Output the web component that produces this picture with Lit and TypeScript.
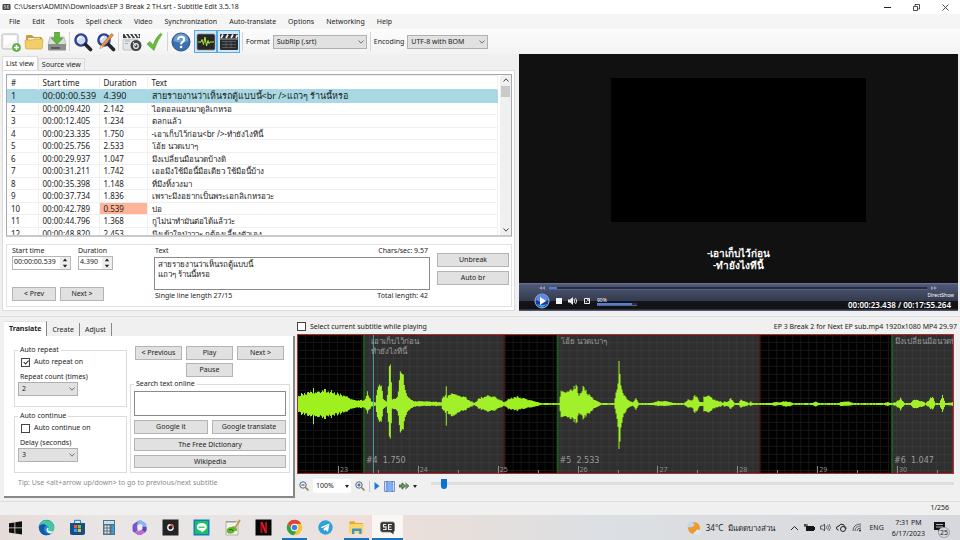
import { LitElement, html, svg, css } from "lit";
import { customElement, property } from "lit/decorators.js";
import { classMap } from "lit/directives/class-map.js";

const base = css`
  :host { display: block; box-sizing: border-box; font: 7px/10px "Noto Sans", "Liberation Sans", sans-serif; color: #1c1c1c; }
  *, *::before, *::after { box-sizing: border-box; }
  button, input, select, textarea { font: inherit; color: inherit; margin: 0; border-radius: 0; outline: 0; }
  svg { display: block; flex: none; }
  .btn { height: 14px; padding: 0; border: 1px solid #b4b4b4; background: #e1e1e1; line-height: 10px; white-space: nowrap; }
  .pick { position: relative; display: block; }
  .pick select { appearance: none; width: 100%; height: 14px; padding: 0 3px; border: 1px solid #b0b0b0; background: #e1e1e1; line-height: 10px; display: block; }
  .pick svg { position: absolute; right: 3px; top: 5px; pointer-events: none; }
  .check { display: flex; align-items: center; gap: 4px; white-space: nowrap; }
  .check input { appearance: none; width: 9px; height: 9px; border: 1px solid #444; background: #fff; display: grid; place-items: center; }
  .check input:checked::before { content: ""; width: 5px; height: 3px; border: solid #222; border-width: 0 0 1px 1px; transform: rotate(-48deg) translate(1px, 0); }
`;

const chevron = html`<svg width="6" height="4" viewBox="0 0 6 4"><path d="M.5.5 3 3.2 5.5.5" fill="none" stroke="#555" stroke-width=".8"/></svg>`;

const lens = svg`<circle cx="8" cy="8" r="5.6" fill="#cfdcf4" stroke="#2f3f94" stroke-width="2.4"/><path d="M5 8a3 3 0 0 1 3-3" stroke="#fff" stroke-width="1.3" fill="none"/>`;

const toolIcons = {
  fresh: svg`<rect x="1" y="2" width="16" height="15" rx="1.5" fill="#f4f4f2" stroke="#b7b9b5"/><path d="M3 4h12v5Q9 10 3 14z" fill="#fff"/><circle cx="15.500" cy="15.500" r="4" fill="#63b640" stroke="#4b9530" stroke-width=".6"/><path d="M15.500 13v5M13 15.500h5" stroke="#fff" stroke-width="1.500"/>`,
  open: svg`<path d="M2 4q0-1 1-1h5l2 2h7q1 0 1 1v10H2z" fill="#c99f3c"/><path d="M4 6h12v5H4z" fill="#f2f2ee"/><path d="M1 9q0-1 1-1h7l1-1h8q1.200 0 1 1l-.7 8q-.1 1-1 1H2.500q-.9 0-1-1z" fill="#f3cd67" stroke="#d2a53e" stroke-width=".7"/>`,
  save: svg`<path d="M3 5h14l2 8H1z" fill="#dcdedd" stroke="#a0a3a2" stroke-width=".6"/><rect x="1" y="12" width="18" height="6.500" rx="1" fill="#8b908f"/><path d="M4 16h9" stroke="#444b4b" stroke-width="1.500"/><path d="M7.500 0h5v6H16l-6 6.500L4 6h3.500z" fill="#63b53e" stroke="#438e2a" stroke-width=".6"/>`,
  find: svg`${lens}<path d="m12.500 12.500 5 5" stroke="#23252f" stroke-width="3.600" stroke-linecap="round"/>`,
  replace: svg`${lens}<path d="m12.500 12.500 5 5" stroke="#23252f" stroke-width="3.600" stroke-linecap="round"/><path d="M17.500 3 7 15l-3 1.500 1-3L15.500 1.500z" fill="#ec9440" stroke="#a65c1d" stroke-width=".6"/><path d="m5 13.500 2 1.500-3 1.500z" fill="#f4ddb5"/>`,
  visual: svg`<rect x="1" y="7" width="15" height="11" rx="1" fill="#e5e6e7" stroke="#a4a6a8" stroke-width=".6"/><path d="M1 2h17v4H1z" fill="#35383a"/><path d="m3 2 3 4m1-4 3 4m1-4 3 4m1-4 2 3" stroke="#f3f3f3" stroke-width="1.600"/><path d="M3 9h5M3 11.500h3" stroke="#aaa"/><circle cx="14" cy="13.500" r="5.500" fill="#424548"/><circle cx="14" cy="14" r="2.300" fill="none" stroke="#eee" stroke-width="1.200"/><path d="m14 14-3-4" stroke="#eee"/>`,
  check: svg`<path d="M2 12 5 9.500l3 3.500Q11 5 15.500 1.500l1.500.8Q12 9 9 18.500z" fill="#6bbb3e" stroke="#4d982c" stroke-width=".6"/>`,
  help: svg`<circle cx="10" cy="10" r="9" fill="#3a70b0" stroke="#27508a"/><path d="M2.500 9a7.500 7.500 0 0 1 15 0q-7 3-15 0" fill="#6d9ccd"/><path d="M7 7.700q.2-3 3.200-3t3 2.700q0 1.500-1.600 2.400T10.100 12.500" fill="none" stroke="#fff" stroke-width="2"/><circle cx="10.100" cy="15" r="1.300" fill="#fff"/>`,
  wave: svg`<rect x="1" y="2" width="18" height="16" rx="1.500" fill="#252826" stroke="#8b8e8b" stroke-width=".7"/><path d="M2 10h3l1-2.500 1.500 5L9 5l1.500 9 1.500-5.500 1 3 1-1.500h4" fill="none" stroke="#b7e838"/>`,
  clap: svg`<rect x="1" y="2" width="18" height="16" rx="1" fill="#2a2c2e"/><path d="m2 6 2-3.500m3 3.500 2-3.500m3 3.500 2-3.500m3 3.500 1.500-3" stroke="#eee" stroke-width="1.700"/><path d="M1 7h18" stroke="#ddd" stroke-width=".7"/><path d="M3 9.500h14M3 12.500h14M3 15.500h14M7 9v7M12 9v7" stroke="#777" stroke-width=".6"/>`,
};

const taskIcons = [
  { name: "Start", art: svg`<path d="M2 4.200 7.500 3.400v5.100H2zM8.300 3.300 15 2.300v6.200H8.300zM2 9.300h5.500v5.100L2 13.600zM8.300 9.300H15v6.200l-6.700-1z" fill="#101010"/>` },
  { name: "Edge", art: svg`<circle cx="8.500" cy="8.500" r="7.800" fill="#1c86d1"/><path d="M1 7a7.800 7.800 0 0 1 15.300 2q0 3.300-3.700 3.300-2.700 0-2.600-1.800 1.200-.8.500-2.400C9 5.200 3.500 4.500 1 7" fill="#43c99a"/><path d="M1 8c2-3.500 6-3 7-1.500Q5.500 8 6 11q1 4 6.500 4.200Q5 18 2 12.500 1 10 1 8" fill="#1557a5"/><path d="M10 10.500q0 1.800 2.600 1.800 1.600 0 2.800-.6-.8 2.300-3 2.700-4.200-.5-4-4 .3-1.900 1.600-1.900 1.400 1 0 2" fill="#e9f4f8"/>` },
  { name: "Store", art: svg`<path d="M5.500 4V2q0-.7.700-.7h4.600q.7 0 .7.700v2" fill="none" stroke="#2b8dd0" stroke-width="1.200"/><path d="M1 4h15v10q0 2-2 2H3q-2 0-2-2z" fill="#164f87"/><path d="M5 6h3.200v3.200H5z" fill="#f05a28"/><path d="M8.900 6H12v3.200H8.900z" fill="#84bf30"/><path d="M5 9.900h3.200V13H5z" fill="#25a4e8"/><path d="M8.900 9.900H12V13H8.900z" fill="#fab91c"/>` },
  { name: "Calculator", art: svg`<rect x="3" y="1" width="12" height="15" fill="#5b6c7c"/><rect x="4" y="2" width="10" height="3" fill="#bfe3f6"/><path d="M4.500 7.500h6M4.500 10.500h6M4.500 13.500h6" stroke="#e3eaf0" stroke-width="2" stroke-dasharray="2 1"/><path d="M11.500 6.500H14V15h-2.500z" fill="#30a0dd"/>` },
  { name: "Microsoft 365", art: svg`<path d="M9 1 3 4.500Q1.500 5.500 1.500 7v4q0 2 2 2.500l3-1.500V6z" fill="#7a56c8"/><path d="M9 1q1 0 5.500 3 1 .8 1 2.500v4L11 8V5.500L6.500 6Q6 2.500 9 1" fill="#86b6ee"/><path d="M15.500 8q.5 4-1 5L10 15.800q-1.500.6-3 0L3.500 13.500 11 11V7.500z" fill="#5a49aa"/><path d="M3.500 13.500 7 12l4-1 3.500 2L10 15.800q-1.500.6-3 0z" fill="#bd6cd5"/><path d="M6.500 6.500 9 5l2.500 1.500v3.500L9 11.500 6.500 10z" fill="#efeaf2"/>` },
  { name: "Recorder", art: svg`<path d="M.5.500h16v16H.5z" fill="#222325"/><circle cx="8.500" cy="8.500" r="2.700" fill="none" stroke="#f1f1f1" stroke-width="1.400"/><path d="M8.500 5.800a2.700 2.700 0 0 1 2.700 2.700" fill="none" stroke="#e5392d" stroke-width="1.500"/>` },
  { name: "LINE", art: svg`<path d="M.5.500h16v16H.5z" fill="#147bc0"/><path d="M3 2h11q1 0 1 1v11q0 1-1 1H3q-1 0-1-1V3q0-1 1-1" fill="#19c163"/><path d="M8.500 4c6.500 0 6.500 5.500 3 7.500l-3 2v-1.700C2 11.800 2.500 4 8.500 4" fill="#fff"/><path d="M5.500 8.200h6" stroke="#19c163" stroke-width="1.200"/>` },
  { name: "Notepad++", art: svg`<path d="M2 2.500h12V16H2z" fill="#f2f3ed" stroke="#9d9f95" stroke-width=".7"/><path d="M3 2v2m2-2v2m2-2v2m2-2v2m2-2v2" stroke="#777" stroke-width=".7"/><path d="M2.500 13q0-5 5-5 3-2 5 1l1 3q-3-1-4 2-5 2-7-1" fill="#67b52c"/><path d="M5 11q3-2 4 1" fill="none" stroke="#265d15"/><path d="m16 1-5 8" stroke="#c89945" stroke-width="1.700"/>` },
  { name: "Netflix", art: svg`<path d="M.5.500h16v16H.5z" fill="#080707"/><path d="M5.500 3h2v11h-2zM10 3h2v11h-2z" fill="#a8101a"/><path d="M5.500 3h2L12 14h-2z" fill="#e51a26"/>` },
  { name: "Chrome", run: true, art: svg`<circle cx="8.500" cy="8.500" r="7.700" fill="#f7c52b"/><path d="M1.800 4.700a7.700 7.700 0 0 1 13.400 0L8.500 5Q5.500 5.500 5.500 10z" fill="#df4334"/><path d="M1.800 4.700 5.500 10.500q2 2.500 5 1.500l-2.800 4.200A7.700 7.700 0 0 1 1.800 4.700" fill="#2fa251"/><circle cx="8.500" cy="8.500" r="3.700" fill="#fff"/><circle cx="8.500" cy="8.500" r="2.800" fill="#3f7fe5"/>` },
  { name: "Telegram", art: svg`<circle cx="8.500" cy="8.500" r="7.200" fill="#2fa0d8"/><path d="m3.500 8.200 9-3.700L11 12.700 8.300 10.800 7 12.200l-.4-2.700L11 6 5.600 9z" fill="#fff"/>` },
  { name: "File Explorer", run: true, art: svg`<path d="M1.500 3q0-.8.800-.8H6L7.500 4H15v10H1.500z" fill="#e8a72c"/><path d="M1.500 5H15.500v9.500h-14z" fill="#fad66b"/><path d="M4 9.500h9.500v5.500h-2.300v-3H6.300v3H4z" fill="#3d92c9"/>` },
  { name: "Subtitle Edit", run: true, on: true, art: svg`<rect x="1.500" y="3" width="14" height="10" rx="2" fill="#343536" stroke="#777" stroke-width=".8"/><path d="m11 12.500 3.500 3v-4z" fill="#343536"/><path d="M7.200 5.500H4.500v2.400h2.500v2.600H4M12.800 5.500H9.500v5h3.300M9.500 8h2.800" fill="none" stroke="#eee" stroke-width="1.100"/>` },
];

const rows: [string, string, string][] = [
  ["00:00:00.539", "4.390", "สายรายงานว่าเห็นรถตู้แบบนี้<br />แถวๆ ร้านนี้หรอ"],
  ["00:00:09.420", "2.142", "ไอดอลแอบมาดูลิเกหรอ"],
  ["00:00:12.405", "1.234", "ตลกแล้ว"],
  ["00:00:23.335", "1.750", "-เอาเก็บไว้ก่อน<br />-ทำยังไงทีนี้"],
  ["00:00:25.756", "2.533", "โอ้ย นวดเบาๆ"],
  ["00:00:29.937", "1.047", "มึงเปลี่ยนมือนวดบ้างดิ"],
  ["00:00:31.211", "1.742", "เออมึงใช้มือนี้มือเดียว ใช้มือนี้บ้าง"],
  ["00:00:35.398", "1.148", "ที่มึงทิ้งวงมา"],
  ["00:00:37.734", "1.836", "เพราะมึงอยากเป็นพระเอกลิเกหรอวะ"],
  ["00:00:42.789", "0.539", "ปอ"],
  ["00:00:44.796", "1.368", "กูไม่น่าทำมันต่อได้แล้วว่ะ"],
  ["00:00:48.820", "2.453", "มึงเข้าใจป่าววะ กูต้องเลี้ยงตัวเอง"],
];

@customElement("subtitle-list")
class SubtitleList extends LitElement {
  static styles = [base, css`
    :host { display: flex; min-height: 0; flex: 1; border: 1px solid #a3a8b0; border-bottom: 2px solid #c9c9c9; background: #fff; overflow: hidden; font-size: 8px; }
    .clip { flex: 1; min-width: 0; height: 100%; overflow: hidden; }
    table { width: 100%; height: 165px; border-collapse: collapse; table-layout: fixed; }
    th, td { padding: 0 0 0 4px; text-align: left; font-weight: 400; white-space: nowrap; line-height: 11px; border: 1px solid #f0f0f0; border-left: 0; overflow: hidden; }
    thead tr { height: 14px; }
    th { border-bottom: 0; }
    .num { width: 31px; } .start { width: 61px; } .dur { width: 48px; }
    tr.sel td { background: #a9d8e5; border-color: #a9d8e5; font-size: 9px; }
    td.short { background: #ffb397; }
    .bar { width: 11px; background: #f0f0f0; display: flex; flex-direction: column; align-items: center; padding: 3px 0; margin-left: 2px; }
    .thumb { width: 9px; height: 11px; background: #c9c9c9; margin-top: 4px; }
    .down { margin-top: auto; }
  `];
  render() {
    return html`<div class="clip"><table>
      <thead><tr><th class="num">#</th><th class="start">Start time</th><th class="dur">Duration</th><th>Text</th></tr></thead>
      <tbody>${rows.map(([s, d, t], i) => html`<tr class=${classMap({ sel: i === 0 })}>
        <td>${i + 1}</td><td>${s}</td><td class=${classMap({ short: Number(d) < 1 })}>${d}</td><td>${t}</td></tr>`)}</tbody>
    </table></div>
    <div class="bar">
      <svg width="6" height="4" viewBox="0 0 6 4"><path d="M.5 3.500 3 .8l2.500 2.700" fill="none" stroke="#444"/></svg>
      <div class="thumb"></div>
      <svg class="down" width="6" height="4" viewBox="0 0 6 4"><path d="M.5.500 3 3.200 5.500.500" fill="none" stroke="#444"/></svg>
    </div>`;
  }
}

@customElement("subtitle-editor")
class SubtitleEditor extends LitElement {
  static styles = [base, css`
    :host { display: flex; flex: none; gap: 7px; height: 63px; border: 1px solid #e2e2e2; padding: 1px 2px 3px 5px; }
    .timing { width: 135px; display: flex; flex-direction: column; justify-content: space-between; }
    .fields { display: flex; gap: 7px; }
    .fields label { display: block; }
    .spin { display: flex; width: 59px; height: 14px; border: 1px solid #b5b5b5; background: #fff; }
    .spin.small { width: 35px; }
    .spin input { flex: 1; min-width: 0; width: 0; border: 0; padding: 0 0 2px 1px; background: none; }
    .arrows { width: 10px; background: #ededed; display: grid; place-items: center; }
    .nav { display: flex; gap: 4px; margin: 0 0 2px; }
    .nav .btn { width: 44px; }
    .text { flex: 1; display: flex; flex-direction: column; }
    .line { display: flex; justify-content: space-between; padding: 0 2px 0 1px; }
    textarea { flex: none; width: 100%; height: 33px; margin: 1px 0; padding: 1px 3px; border: 1px solid #8a8a8a; resize: none; font-size: 8px; line-height: 10px; overflow: hidden; }
    .side { width: 72px; display: flex; flex-direction: column; gap: 4px; padding-top: 7px; }
  `];
  render() {
    const arrows = html`<span class="arrows"><svg width="6" height="10" viewBox="0 0 6 10"><path d="M3 .5 5.200 3.300H.8zM3 9.500.8 6.700h4.400z" fill="#222"/></svg></span>`;
    return html`<div class="timing">
      <div class="fields">
        <div><label for="st">Start time</label><div class="spin"><input id="st" value="00:00:00.539">${arrows}</div></div>
        <div><label for="du">Duration</label><div class="spin small"><input id="du" value="4.390">${arrows}</div></div>
      </div>
      <div class="nav"><button class="btn">&lt; Prev</button><button class="btn">Next &gt;</button></div>
    </div>
    <div class="text">
      <div class="line"><label for="tx">Text</label><span>Chars/sec: 9.57</span></div>
      <textarea id="tx" .value=${"สายรายงานว่าเห็นรถตู้แบบนี้\nแถวๆ ร้านนี้หรอ"}></textarea>
      <div class="line"><span>Single line length 27/15</span><span>Total length: 42</span></div>
    </div>
    <div class="side"><button class="btn">Unbreak</button><button class="btn">Auto br</button></div>`;
  }
}

@customElement("video-player")
class VideoPlayer extends LitElement {
  static styles = [base, css`
    :host { display: flex; flex-direction: column; background: #111; color: #fff; }
    .stage { flex: 1; display: flex; flex-direction: column; align-items: center; padding: 24px 0 12px; }
    .frame { width: 58%; flex: 1; background: #000; }
    .subs { margin-top: 25px; text-align: center; font-size: 10px; line-height: 12px; font-weight: 600; }
    .controls { height: 28px; background: linear-gradient(#6c7695 0, #4c5675 2px, #434b65 9px, #343a4d 18px, #14151a 18px, #121213 26px, #4d5571 27px); padding: 1px 4px 0 20px; }
    .seek { display: flex; align-items: center; gap: 4px; height: 8px; padding-right: 17px; }
    .track { flex: 1; height: 3px; background: #272e42; border-bottom: 1px solid #596380; }
    .done { height: 2px; background: #4d7fdd; }
    .row { display: flex; align-items: center; gap: 6px; height: 18px; }
    .row button { border: 0; padding: 0; background: none; }
    .play { margin-left: -5px; }
    .vol { width: 41px; font-size: 5px; line-height: 6px; padding-left: 1px; }
    .vol .track { height: 3px; }
    .info { margin-left: auto; text-align: right; font-size: 5px; line-height: 7px; }
    .info b { display: block; font-size: 8px; line-height: 11px; font-weight: 600; padding-right: 3px; }
  `];
  render() {
    return html`<div class="stage"><div class="frame"></div><div class="subs">-เอาเก็บไว้ก่อน<br>-ทำยังไงทีนี้</div></div>
    <div class="controls">
      <div class="seek">
        <svg width="6" height="4" viewBox="0 0 6 4"><path d="M3 0v4L0 2zM6 0v4L3 2z" fill="#8c96b3"/></svg>
        <div class="track"><div class="done" style="width:2%"></div></div>
        <svg width="6" height="4" viewBox="0 0 6 4"><path d="M0 0v4l3-2zM3 0v4l3-2z" fill="#8c96b3"/></svg>
      </div>
      <div class="row">
        <button class="play" aria-label="Play"><svg width="16" height="16" viewBox="0 0 16 16"><circle cx="8" cy="8" r="7" fill="#173aa0" stroke="#a9bde9"/><path d="M2 7a6 6 0 0 1 12 0Q8 10 2 7" fill="#5d8be0"/><path d="M3 11q5 6 10 0-5 2-10 0" fill="#35b4ed"/><path d="m6 4 6 4-6 4z" fill="#fff"/></svg></button>
        <button aria-label="Stop"><svg width="6" height="6"><path d="M0 0h6v6H0z" fill="#f4f4f4"/></svg></button>
        <button aria-label="Mute"><svg width="10" height="8" viewBox="0 0 10 8"><path d="M0 2.500h2L5 0v8L2 5.500H0z" fill="#eee"/><path d="M6 2q1.500 2 0 4M7.500 1q2.500 3 0 6" fill="none" stroke="#ddd"/></svg></button>
        <button aria-label="Full screen"><svg width="6" height="6" viewBox="0 0 6 6"><path d="M.5.500h5v5h-5z" fill="#222" stroke="#eee"/><path d="m2 4 2-2M3 1.500h1.500V3" stroke="#eee" fill="none" stroke-width=".7"/></svg></button>
        <div class="vol">90%<div class="track"><div class="done" style="width:88%"></div></div></div>
        <div class="info">DirectShow<b>00:00:23.438 / 00:17:55.264</b></div>
      </div>
    </div>`;
  }
}

@customElement("helper-panel")
class HelperPanel extends LitElement {
  static styles = [base, css`
    :host { display: flex; flex-direction: column; padding: 4px 0 3px 4px; }
    .tabs { display: flex; align-items: flex-end; }
    .tabs button { height: 13px; border: 0; border-right: 1px solid #888; padding: 0 5px; background: none; line-height: 10px; }
    .tabs .on { height: 15px; background: #fff; padding: 0 5px; border-top: 1px solid #e5e5e5; font-weight: 700; }
    .page { flex: 1; background: #fff; border: solid #888; border-width: 0 2px 2px 0; padding: 9px 3px 0 10px; }
    .cols { display: flex; gap: 3px; align-items: flex-end; }
    .left { width: 113px; display: flex; flex-direction: column; gap: 4px; }
    fieldset { margin: 0; padding: 0 3px; border: 1px solid #dcdcdc; min-width: 0; }
    legend { padding: 0 2px; line-height: 10px; }
    .left fieldset { height: 62px; }
    .left .check { margin: 2px 3px 5px; }
    .left label.t { display: block; line-height: 10px; padding-left: 2px; }
    .left .pick { width: 60px; }
    .right { flex: 1; }
    .play { display: grid; grid-template-columns: repeat(3, 47px); gap: 3px 4px; padding-left: 5px; margin-bottom: 2px; }
    .play .mid { grid-column: 2; }
    .web { display: grid; grid-template-columns: 1fr 1fr; gap: 4px; padding: 2px 0 4px; }
    .web textarea { grid-column: 1 / 3; height: 25px; border: 1px solid #8a8a8a; resize: none; width: 100%; display: block; }
    .web .wide { grid-column: 1 / 3; height: 13px; }
    .tip { margin: 5px 4px 0; color: #8b8b8b; }
  `];
  render() {
    return html`<div class="tabs"><button class="on">Translate</button><button>Create</button><button>Adjust</button></div>
    <div class="page"><div class="cols">
      <div class="left">
        <fieldset><legend>Auto repeat</legend>
          <label class="check"><input type="checkbox" checked>Auto repeat on</label>
          <label class="t" for="rc">Repeat count (times)</label><div class="pick"><select id="rc"><option>2</option></select>${chevron}</div>
        </fieldset>
        <fieldset><legend>Auto continue</legend>
          <label class="check"><input type="checkbox">Auto continue on</label>
          <label class="t" for="dl">Delay (seconds)</label><div class="pick"><select id="dl"><option>3</option></select>${chevron}</div>
        </fieldset>
      </div>
      <div class="right">
        <div class="play"><button class="btn">&lt; Previous</button><button class="btn">Play</button><button class="btn">Next &gt;</button><button class="btn mid">Pause</button></div>
        <fieldset><legend>Search text online</legend><div class="web">
          <textarea aria-label="Search text online"></textarea>
          <button class="btn">Google it</button><button class="btn">Google translate</button>
          <button class="btn wide">The Free Dictionary</button><button class="btn wide">Wikipedia</button>
        </div></fieldset>
      </div>
    </div><p class="tip">Tip: Use &lt;alt+arrow up/down&gt; to go to previous/next subtitle</p></div>`;
  }
}

/* Peak envelope: position, height above and height below the centre line. */
const peaks = [
  [0,9,9],[5,11,11],[13,13,13],[14,13,13],[15,18,23],[16,12,13],[26,15,15],[36,12,12],[46,9,9],[56,4,4],[66,4,4],[69,12,9],[73,3,3],[77,2,2],[80,21,19],[83,22,21],[85,5,5],[88,3,3],[90,20,20],[91,42,36],[92,40,35],[94,5,5],[99,7,7],[101,25,22],[103,39,34],[104,38,32],[106,22,20],[108,10,10],[111,7,7],[115,3,3],[126,3,2],[143,2,2],[145,8,7],[147,9,9],[148,22,27],[149,8,9],[155,12,14],[160,9,9],[166,8,7],[171,4,4],[176,1,1],[181,6,5],[190,9,8],[196,8,7],[206,2,2],[210,5,5],[218,8,7],[226,6,5],[236,3,3],[243,1,1],[261,1,1],[263,14,14],[270,13,14],[276,18,18],[278,20,20],[281,10,11],[286,18,15],[290,11,11],[296,5,5],[303,1,1],[316,1,1],[318,12,10],[320,25,28],[321,41,43],[322,32,40],[324,14,18],[326,11,12],[330,4,4],[335,2,2],[338,6,6],[341,1,1],[353,1,1],[360,3,2],[370,3,2],[375,1,1],[386,1,1],[391,5,4],[394,4,4],[397,9,9],[400,7,7],[402,2,2],[405,2,2],[406,8,8],[411,9,9],[416,5,5],[420,3,3],[423,3,3],[425,1,1],[427,3,3],[429,2,2],[433,6,5],[437,1,1],[441,1,1],[443,5,4],[451,1,1],[453,3,2],[455,1,1],[474,1,1],[476,2,2],[483,2,1],[488,3,3],[493,2,2],[495,1,1],[515,1,1],[518,3,3],[521,1,1],[540,1,1],[543,2,2],[550,3,2],[556,1,1],[586,1,1],[590,2,2],[595,1,1],[598,2,2],[603,6,6],[607,1,1],[613,1,1],[616,5,5],[625,3,3],[628,1,1],[635,8,6],[638,1,1],[642,1,1],[645,10,9],[648,1,1],[656,2,2],
];
const W = 656, MID = 69;

function envelope(): string {
  const up: string[] = [], down: string[] = [];
  let k = 0;
  for (let x = 0; x < W; x++) {
    while (k < peaks.length - 2 && peaks[k + 1][0] <= x) k++;
    const [a, b] = [peaks[k], peaks[k + 1]];
    const f = (x - a[0]) / (b[0] - a[0]);
    const n = 0.78 + 0.22 * Math.abs(Math.sin(x * 12.99) * Math.cos(x * 4.1)) + (x % 3 ? 0 : 0.1);
    const u = Math.max(0.7, (a[1] + (b[1] - a[1]) * f) * n), d = Math.max(0.7, (a[2] + (b[2] - a[2]) * f) * n);
    up.push(`L${x} ${(MID - u).toFixed(1)}H${x + 1}`);
    down.unshift(`L${x + 1} ${(MID + d).toFixed(1)}H${x}`);
  }
  return `M0 ${MID}${up.join("")}${down.join("")}Z`;
}

const cues = [
  { from: 66, to: 206, tag: "#4  1.750", lines: ["เอาเก็บไว้ก่อน", "ทำยังไงทีนี้"] },
  { from: 260, to: 462, tag: "#5  2.533", lines: ["โอ้ย นวดเบาๆ"] },
  { from: 595, to: 656, tag: "#6  1.047", lines: ["มึงเปลี่ยนมือนวดบ้างดิ"], last: true },
];

@customElement("wave-view")
class WaveView extends LitElement {
  static styles = [base, css`
    :host { display: flex; flex-direction: column; padding: 4px 6px 3px 2px; min-width: 0; }
    .head { display: flex; justify-content: space-between; align-items: center; height: 11px; margin: 0 -3px 2px 0; white-space: nowrap; }
    .wave { position: relative; flex: 1; border: 1px solid #b8292c; background: #000; overflow: hidden; }
    .wave > svg { position: absolute; inset: 0; width: 100%; height: 100%; }
    .cue { position: absolute; top: 0; bottom: 0; padding: 1px 0 3px 2px; display: flex; flex-direction: column; justify-content: space-between; color: #9b9b9b; font-size: 8px; white-space: pre; overflow: hidden; }
    .cue p { margin: 0 0 0 1px; }
    .cue .lead { padding-left: 4px; }
    .tag { font: 8px/10px "DejaVu Sans", sans-serif; padding-bottom: 4px; }
    .sec { position: absolute; bottom: 0; height: 7px; border-left: 1px solid #8a8a8a; padding-left: 1px; color: #8f8f8f; line-height: 7px; }
    .half { height: 3px; }
    .tools { display: flex; align-items: center; height: 24px; gap: 4px; padding: 0 0 0 2px; }
    .tools button { padding: 0; border: 0; background: none; }
    .zoom { width: 38px; position: relative; }
    .zoom select { appearance: none; border: 0; background: #fff; width: 100%; height: 14px; padding: 0 3px; display: block; }
    .zoom svg { position: absolute; right: 2px; top: 6px; }
    .sep { width: 1px; height: 11px; background: #c8c8c8; }
    .pos { flex: 1; min-width: 0; appearance: none; height: 12px; background: linear-gradient(#dedede, #dedede) center / 100% 3px no-repeat; margin: 0 0 5px 10px; }
    .pos::-webkit-slider-thumb { appearance: none; width: 6px; height: 10px; background: #0a74d1; border-radius: 0 0 3px 3px; }
  `];
  render() {
    const pc = (n: number) => `${(n / W) * 100}%`;
    const grid = (step: number, n: number) => Array.from({ length: n }, (_, i) => i * step + 7);
    const ticks = Array.from({ length: 16 }, (_, i) => 40 + i * 40);
    const caret = html`<svg width="4" height="3" viewBox="0 0 4 3"><path d="M0 0h4L2 3z" fill="#222"/></svg>`;
    return html`<div class="head"><label class="check"><input type="checkbox">Select current subtitle while playing</label><span>EP 3 Break 2 for Next EP sub.mp4 1920x1080 MP4 29.97</span></div>
    <div class="wave">
      <svg viewBox="0 0 656 138" preserveAspectRatio="none">
        <path d=${grid(8, 82).map((x) => `M${x + .5} 0v138`).join("") + grid(8, 17).map((y) => `M0 ${y + .5}h656`).join("")} stroke="#151515"/>
        ${cues.map((c) => svg`<rect x=${c.from} y="0" width=${c.to - c.from} height="138" fill="#242424"/><path d="M${c.from} 0v138" stroke="#145816" stroke-width="2"/>${c.last ? "" : svg`<path d="M${c.to + .5} 0v138" stroke="#701717"/>`}`)}
        ${cues.map((c) => svg`<path d=${grid(8, 82).filter((x) => x > c.from && x < c.to).map((x) => `M${x + .5} 0v138`).join("") + grid(8, 17).map((y) => `M${c.from} ${y + .5}H${c.to}`).join("")} stroke="#2f2f2f"/>`)}
        <path d=${envelope()} fill="#9ef01f"/>
        ${cues.map((c) => svg`<rect x=${c.from} y="0" width=${c.to - c.from} height="138" fill="#fff" fill-opacity=".05"/>`)}
        <path d="M75.500 0v138" stroke="#4aa3a9"/>
      </svg>
      ${cues.map((c, i) => html`<div class="cue" style="left:${pc(c.from)};width:${pc(c.to - c.from)}"><div class=${i ? "" : "lead"}>${c.lines.map((l) => html`<p>${l}</p>`)}</div><span class="tag">${c.tag}</span></div>`)}
      ${ticks.map((x, i) => html`<span class=${classMap({ sec: true, half: i % 2 === 1 })} style="left:${pc(x)}">${i % 2 ? "" : 23 + i / 2}</span>`)}
    </div>
    <div class="tools">
      <button aria-label="Zoom out"><svg width="10" height="10" viewBox="0 0 10 10"><circle cx="4" cy="4" r="3.200" fill="#eaf1fa" stroke="#566787"/><path d="M2.500 4h3" stroke="#345"/><path d="m6.500 6.500 3 3" stroke="#a87b4c" stroke-width="1.600"/></svg></button>
      <span class="zoom"><select aria-label="Zoom"><option>100%</option></select>${caret}</span>
      <button aria-label="Zoom in"><svg width="10" height="10" viewBox="0 0 10 10"><circle cx="4" cy="4" r="3.200" fill="#eaf1fa" stroke="#566787"/><path d="M2.500 4h3M4 2.500v3" stroke="#345"/><path d="m6.500 6.500 3 3" stroke="#a87b4c" stroke-width="1.600"/></svg></button>
      <span class="sep"></span>
      <button aria-label="Play"><svg width="6" height="8" viewBox="0 0 6 8"><path d="m.5 0 5 4-5 4z" fill="#2a74d8"/></svg></button>
      <button aria-label="Centre"><svg width="11" height="11" viewBox="0 0 11 11"><path d="M.5.500h10v10H.5z" fill="#c6dafa" stroke="#7b95c8"/><path d="M3 0v11M8 0v11" stroke="#3c69bd"/><path d="M4 .500h3.500v10H4z" fill="#7fb0f5"/></svg></button>
      <button aria-label="Speed"><svg width="10" height="8" viewBox="0 0 10 8"><path d="M0 3h3V.8L6.500 4 3 7.200V5H0zM6.500 1 9.800 4 6.500 7" fill="#699d62" stroke="#31532f" stroke-width=".8"/></svg></button>
      ${caret}
      <input class="pos" type="range" aria-label="Position" min="0" max="1000" value="20">
    </div>`;
  }
}

@customElement("task-bar")
class TaskBar extends LitElement {
  @property({ type: Number }) notes = 25;
  static styles = [base, css`
    :host { display: flex; height: 25px; background: linear-gradient(90deg, #e5dcd9, #e9e6e5 12%, #e7e3e3 30%, #eedfd9 38%, #e8dfda 46%, #dcdfe3 62%, #dadcdf 80%, #d6d8dd); }
    .app { width: 31px; border: 0; padding: 0; background: none; display: grid; place-items: center; }
    .run { box-shadow: inset 0 -2px #1d72bd; }
    .run:not(.on) { margin: 0 3px; width: 25px; }
    .on { background: #faf6f4; }
    .tray { margin-left: auto; display: flex; align-items: center; gap: 5px; padding-right: 10px; white-space: nowrap; }
    .weather { display: flex; align-items: center; gap: 4px; margin-right: 10px; font-size: 8px; }
    .deg { margin-right: 1px; }
    .clock { text-align: center; line-height: 11px; margin: 0 3px 0 3px; }
    .eng { margin-left: 2px; }
    .note { position: relative; width: 17px; height: 20px; padding: 4px 1px; }
    .note b { position: absolute; right: 0; bottom: 0; width: 12px; height: 11px; border-radius: 6px; background: #d3d5d9; border: 1px solid #9a9ca0; line-height: 9px; font-weight: 400; text-align: center; }
  `];
  render() {
    return html`${taskIcons.map((t) => html`<button class=${classMap({ app: true, run: !!t.run, on: !!t.on })} aria-label=${t.name}><svg width="17" height="17" viewBox="0 0 17 17">${t.art}</svg></button>`)}
    <div class="tray">
      <span class="weather"><svg width="16" height="16" viewBox="0 0 16 16"><circle cx="8" cy="8" r="6" fill="#f19a2c"/><path d="M1 7q-1-2.500 1.500-3Q4-.5 6.500 2.500 9 3 8 6q-3 2-7 1" fill="#c2d6ef"/><path d="M8 14.500q-1-2.500 1.500-3 1.500-3.500 4-1Q16 12 14.500 14.500z" fill="#dce7f5"/></svg>
      <span class="deg">34°C</span><span>มีแดดบางส่วน</span></span>
      <svg width="9" height="6" viewBox="0 0 9 6"><path d="M1 5 4.500 1.500 8 5" fill="none" stroke="#222"/></svg>
      <svg width="11" height="8" viewBox="0 0 11 8"><path d="M2 2h8v5H2z" fill="#151515"/><path d="M10 3.500h1v2h-1M0 1h4M1 0v3" stroke="#151515"/></svg>
      <svg width="11" height="9" viewBox="0 0 11 9"><path d="M.5 3h2l2-2v7l-2-2h-2z" fill="none" stroke="#333" stroke-width=".8"/><path d="M6 3q1 1.500 0 3M7.500 2q2 2.500 0 5M9 1q3 3.500 0 7" fill="none" stroke="#444" stroke-width=".7"/></svg>
      <svg width="11" height="9" viewBox="0 0 11 9"><path d="M2.500 7Q.500 7 .5 5t2.500-2Q4.500 0 7 1.500q1.500.5 1.500 2Q10.500 4 10 6" fill="none" stroke="#222"/><circle cx="7" cy="6" r="2.500" fill="#ddd" stroke="#222"/></svg>
      <svg width="10" height="9" viewBox="0 0 10 9"><path d="M1 8Q1 1 9 1M3 8q0-5 6-5M5 8q0-3 4-3" fill="none" stroke="#444" stroke-width=".8"/><circle cx="8" cy="7.500" r="1" fill="#222"/></svg>
      <span class="eng">ENG</span>
      <span class="clock">7:31 PM<br>6/17/2023</span>
      <span class="note"><svg width="11" height="11" viewBox="0 0 11 11"><path d="M0 0h11v8H6L4 10.500V8H0z" fill="#151515"/><path d="M2 2.500h7M2 5h7" stroke="#ddd" stroke-width=".8"/></svg><b>${this.notes}</b></span>
    </div>`;
  }
}

@customElement("app-root")
class AppRoot extends LitElement {
  static styles = [base, css`
    :host { display: flex; flex-direction: column; min-height: 100vh; background: #f0f0f0; overflow: hidden; }
    .title { display: flex; align-items: center; gap: 3px; height: 14px; padding: 0 0 0 2px; background: #fff; }
    .win { margin-left: auto; display: flex; }
    .win button { width: 29px; border: 0; background: none; padding: 0; display: grid; place-items: center; }
    .menu { display: flex; gap: 12px; height: 15px; align-items: center; padding-left: 9px; background: #f5f5f5; }
    .menu a { color: inherit; text-decoration: none; white-space: nowrap; }
    .tools { display: flex; align-items: center; height: 25px; background: linear-gradient(#fcfcfc, #f3f3f3); padding-left: 1px; gap: 3px; white-space: nowrap; }
    .tools button { width: 20px; height: 23px; padding: 0; border: 0; background: none; display: grid; place-items: center; }
    .tools .tog { width: 23px; border: 1px solid #5aa9e6; background: #cfe6f9; }
    .tools .tog + .tog { margin-left: -3px; }
    .sep { width: 1px; height: 19px; background: #d4d4d4; margin-left: -1px; }
    .fmt { width: 94px; margin-right: 1px; } .enc { width: 81px; }
    .main { flex: 1 0 262px; min-height: 0; display: grid; grid-template-columns: 519fr 441fr; grid-template-rows: minmax(0, 1fr); }
    .left { display: flex; flex-direction: column; padding: 2px 4px 5px 2px; min-width: 0; min-height: 0; }
    .tabs { display: flex; align-items: flex-end; height: 14px; flex: none; }
    .tabs button { border: 1px solid #dcdcdc; border-bottom: 0; height: 12px; padding: 0 3px; background: #f0f0f0; line-height: 10px; white-space: nowrap; }
    .tabs .on { height: 14px; background: #fff; }
    .page { flex: 1; min-height: 0; display: flex; flex-direction: column; gap: 7px; background: #fff; border: 1px solid #dcdcdc; padding: 3px 2px 3px 3px; }
    .video { padding: 0 2px 5px 0; display: grid; min-height: 0; }
    .bottom { display: grid; grid-template-columns: 295px 1fr; height: 186px; border: solid #dedede; border-width: 1px 0; }
    .status { height: 13px; text-align: right; padding: 1px 11px 0 0; }
  `];
  render() {
    const tool = (k: keyof typeof toolIcons, label: string, cls = "") => html`<button class=${cls} aria-label=${label}><svg width="20" height="20" viewBox="0 0 20 20">${toolIcons[k]}</svg></button>`;
    const sep = html`<span class="sep"></span>`;
    return html`
    <header class="title">
      <svg width="9" height="9" viewBox="0 0 9 9"><rect x=".5" y="1" width="8" height="6" rx="1" fill="#444"/><path d="M3.800 2.500H2.300v1.300h1.300v1.500H2M7 2.500H5.200v2.800H7M5.200 4H7" stroke="#eee" stroke-width=".6" fill="none"/></svg>
      <span>C:\\Users\\ADMIN\\Downloads\\EP 3 Break 2 TH.srt - Subtitle Edit 3.5.18</span>
      <span class="win">
        <button aria-label="Minimize"><svg width="7" height="7" viewBox="0 0 7 7"><path d="M0 3.500h7" stroke="#222"/></svg></button>
        <button aria-label="Restore"><svg width="7" height="7" viewBox="0 0 7 7"><path d="M.5 2.500h4v4h-4zM2 2V.5h4.500V5H5" fill="none" stroke="#222" stroke-width=".8"/></svg></button>
        <button aria-label="Close"><svg width="7" height="7" viewBox="0 0 7 7"><path d="m.5.500 6 6m0-6-6 6" stroke="#222" stroke-width=".8"/></svg></button>
      </span>
    </header>
    <nav class="menu">${["File", "Edit", "Tools", "Spell check", "Video", "Synchronization", "Auto-translate", "Options", "Networking", "Help"].map((m) => html`<a href="#">${m}</a>`)}</nav>
    <div class="tools">
      ${tool("fresh", "New")}${tool("open", "Open")}${tool("save", "Save")}${sep}
      ${tool("find", "Find")}${tool("replace", "Replace")}${sep}
      ${tool("visual", "Visual sync")}${tool("check", "Spell check")}${sep}
      ${tool("help", "Help")}${tool("wave", "Waveform", "tog")}${tool("clap", "Video", "tog")}${sep}
      <label for="fmt">Format</label><div class="pick fmt"><select id="fmt"><option>SubRip (.srt)</option></select>${chevron}</div>${sep}
      <label for="enc">Encoding</label><div class="pick enc"><select id="enc"><option>UTF-8 with BOM</option></select>${chevron}</div>
    </div>
    <main class="main">
      <section class="left">
        <div class="tabs"><button class="on">List view</button><button>Source view</button></div>
        <div class="page"><subtitle-list></subtitle-list><subtitle-editor></subtitle-editor></div>
      </section>
      <div class="video"><video-player></video-player></div>
    </main>
    <section class="bottom"><helper-panel></helper-panel><wave-view></wave-view></section>
    <div class="status">1/256</div>
    <task-bar></task-bar>`;
  }
}
